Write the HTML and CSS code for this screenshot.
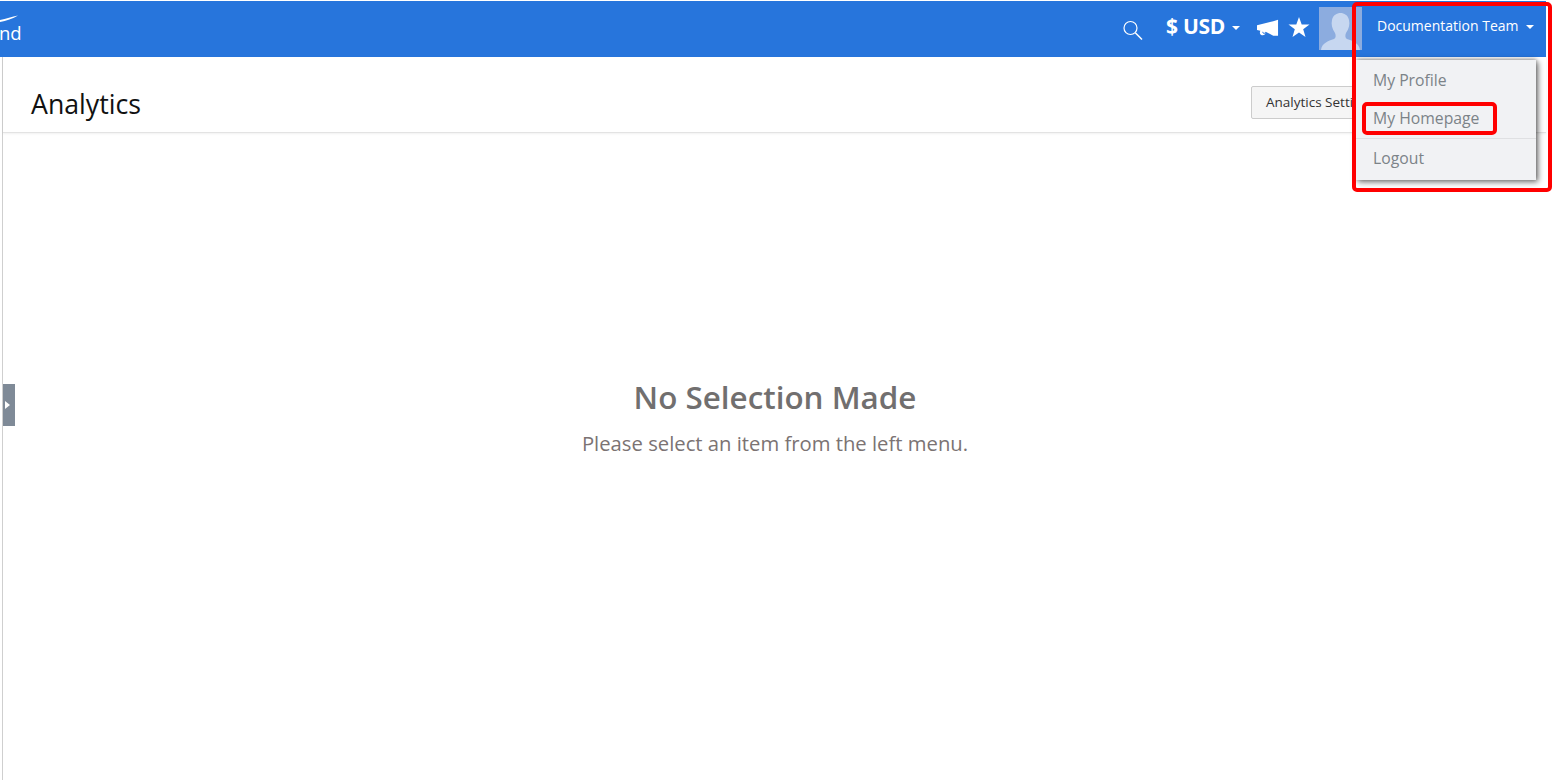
FILE: index.html
```html
<!DOCTYPE html>
<html lang="en">
<head>
<meta charset="utf-8">
<title>Analytics</title>
<link rel="stylesheet" href="styles.css">
</head>
<body>
<div class="app">
  <header class="topbar">
    <div class="brand">
      <svg class="swoosh" width="20" height="7" viewBox="0 0 20 7"><path d="M0 5C6 3.800 12 1.800 18 .5 13 3.500 6 6 0 7z" fill="#fff"/></svg>
      <span class="brand-text">nd</span>
    </div>
    <nav class="tools">
      <svg class="search" width="22" height="22" viewBox="0 0 22 22" fill="none" stroke="#fff"><circle cx="8.500" cy="9" r="6.500" stroke-width="1.200"/><path d="M13.300 13.700 20 20.500" stroke-width="1.500"/></svg>
      <span class="currency">$ USD</span>
      <span class="caret caret-currency"></span>
      <svg class="horn" width="22" height="18" viewBox="0 0 23 18"><path d="M0 6 17 2 22 .5V17H17L9 13C9 16 7 17 5 16.500 3 16 2.500 14 3.500 12L0 11z" fill="#fff"/><path d="M6 13C6 15 8 15.300 9 13.500" stroke="#2775dc" fill="none"/></svg>
      <svg class="star" width="22" height="21" viewBox="0 0 22 21"><path d="M11 0 13.700 7.500H21.500L15.200 12.300 17.500 20 11 15.400 4.500 20 6.800 12.300.5 7.500H8.300z" fill="#fff"/></svg>
      <svg class="avatar" width="43" height="43" viewBox="0 0 43 43"><rect width="43" height="43" fill="#8cacdf"/><path d="M2 43C3 36 9 34 15 32 17 31 17 28 16 26 13 22 12 17 13 13 14 8 18 6 21.500 6 25 6 29 8 30 13 31 17 30 22 27 26 26 28 26 31 28 32 34 34 40 36 41 43z" fill="#c7d7f0"/></svg>
      <div class="user">
        <span class="user-name">Documentation Team</span>
        <span class="caret"></span>
      </div>
    </nav>
  </header>

  <main class="content">
    <div class="title-bar">
      <h1 class="title">Analytics</h1>
      <button class="settings-btn">Analytics Settings</button>
    </div>
    <div class="empty">
      <h2 class="empty-title">No Selection Made</h2>
      <p class="empty-text">Please select an item from the left menu.</p>
    </div>
    <div class="side-tab"><span class="side-arrow"></span></div>
  </main>

  <ul class="menu">
    <li class="menu-item">My Profile</li>
    <li class="menu-item">My Homepage</li>
    <li class="menu-sep"></li>
    <li class="menu-item">Logout</li>
  </ul>
</div>
<div class="mark mark-outer"></div>
<div class="mark mark-inner"></div>
</body>
</html>
```

FILE: styles.css
```css
* { box-sizing: border-box; }
html, body { margin: 0; height: 100%; overflow: hidden; background: #fff; }
body { font-family: "Open Sans", "Noto Sans", sans-serif; color: #333; }

.app { position: relative; width: 1546px; height: 780px; padding-top: 1px; display: flex; flex-direction: column; }

.topbar { flex: none; height: 56px; background: #2775dc; display: flex; align-items: flex-start; justify-content: space-between; color: #fff; }
.brand { position: relative; width: 40px; height: 56px; }
.swoosh { position: absolute; left: 0; top: 14px; }
.brand-text { position: absolute; left: -1px; top: 19px; font-size: 18.500px; line-height: 25px; }

.tools { display: flex; align-items: flex-start; }
.search { margin-top: 18px; }
.currency { margin-left: 22px; margin-top: 9px; font-size: 21px; line-height: 32px; font-weight: 700; letter-spacing: -.3px; }
.caret { display: inline-block; width: 0; height: 0; border: 4.500px solid transparent; border-top-color: #fff; border-bottom-width: 0; }
.caret-currency { margin-left: 7px; margin-top: 25px; }
.horn { margin-left: 17px; margin-top: 18px; }
.star { margin-left: 9px; margin-top: 16px; }
.avatar { margin-left: 9px; margin-top: 6px; }
.user { width: 184px; height: 56px; padding: 14px 0 0 15px; display: flex; align-items: flex-start; font-size: 14px; line-height: 22px; }
.user .caret { margin-left: 7px; margin-top: 10px; }

.content { position: relative; flex: 1; margin-left: 2px; border-left: 1px solid #cfcfcf; display: flex; flex-direction: column; }
.title-bar { flex: none; height: 76px; border-bottom: 1px solid #e3e3e3; box-shadow: 0 1px 2px rgba(0,0,0,.06); display: flex; align-items: flex-start; justify-content: space-between; }
.title { margin: 28px 0 0 28px; font-size: 26.700px; line-height: 38px; font-weight: 400; color: #111; }
.settings-btn { margin: 29px 145px 0 0; width: 150px; height: 33px; padding: 0 0 2px 14px; text-align: left; border: 1px solid #ccc; border-radius: 2px; background: #f5f5f5; color: #333; font: 13.500px/20px "Open Sans", sans-serif; white-space: nowrap; }

.empty { text-align: center; padding-top: 242px; margin-right: -1px; }
.empty-title { margin: 0; font-size: 31.400px; line-height: 44px; font-weight: 600; color: #716f6f; }
.empty-text { margin: 9px 0 0; font-size: 20.250px; line-height: 30px; color: #7b7373; }

.side-tab { position: absolute; left: 0; top: 327px; width: 12px; height: 42px; padding-right: 4px; background: #7f8a97; display: flex; align-items: center; justify-content: center; }
.side-arrow { width: 0; height: 0; border: 4px solid transparent; border-left: 5px solid #fff; border-right-width: 0; }

.menu { position: absolute; left: 1356px; top: 60px; width: 180px; height: 120px; margin: 0; padding: 0; list-style: none; background: #f1f2f4; box-shadow: 2px 2px 6px rgba(0,0,0,.55), 0 -1px 4px rgba(0,0,0,.3); font-size: 15.750px; color: #7c8388; }
.menu-item { height: 39px; padding: 0 0 0 17px; line-height: 39px; }
.menu-item:first-child { line-height: 41px; }
.menu-sep { height: 1px; background: #dfe0e2; }

.mark { position: absolute; border: 4px solid #f00; pointer-events: none; }
.mark-outer { left: 1352px; top: 2px; width: 200px; height: 190px; border-radius: 5px; }
.mark-inner { left: 1362px; top: 102px; width: 135px; height: 33px; border-radius: 5px; }
```
